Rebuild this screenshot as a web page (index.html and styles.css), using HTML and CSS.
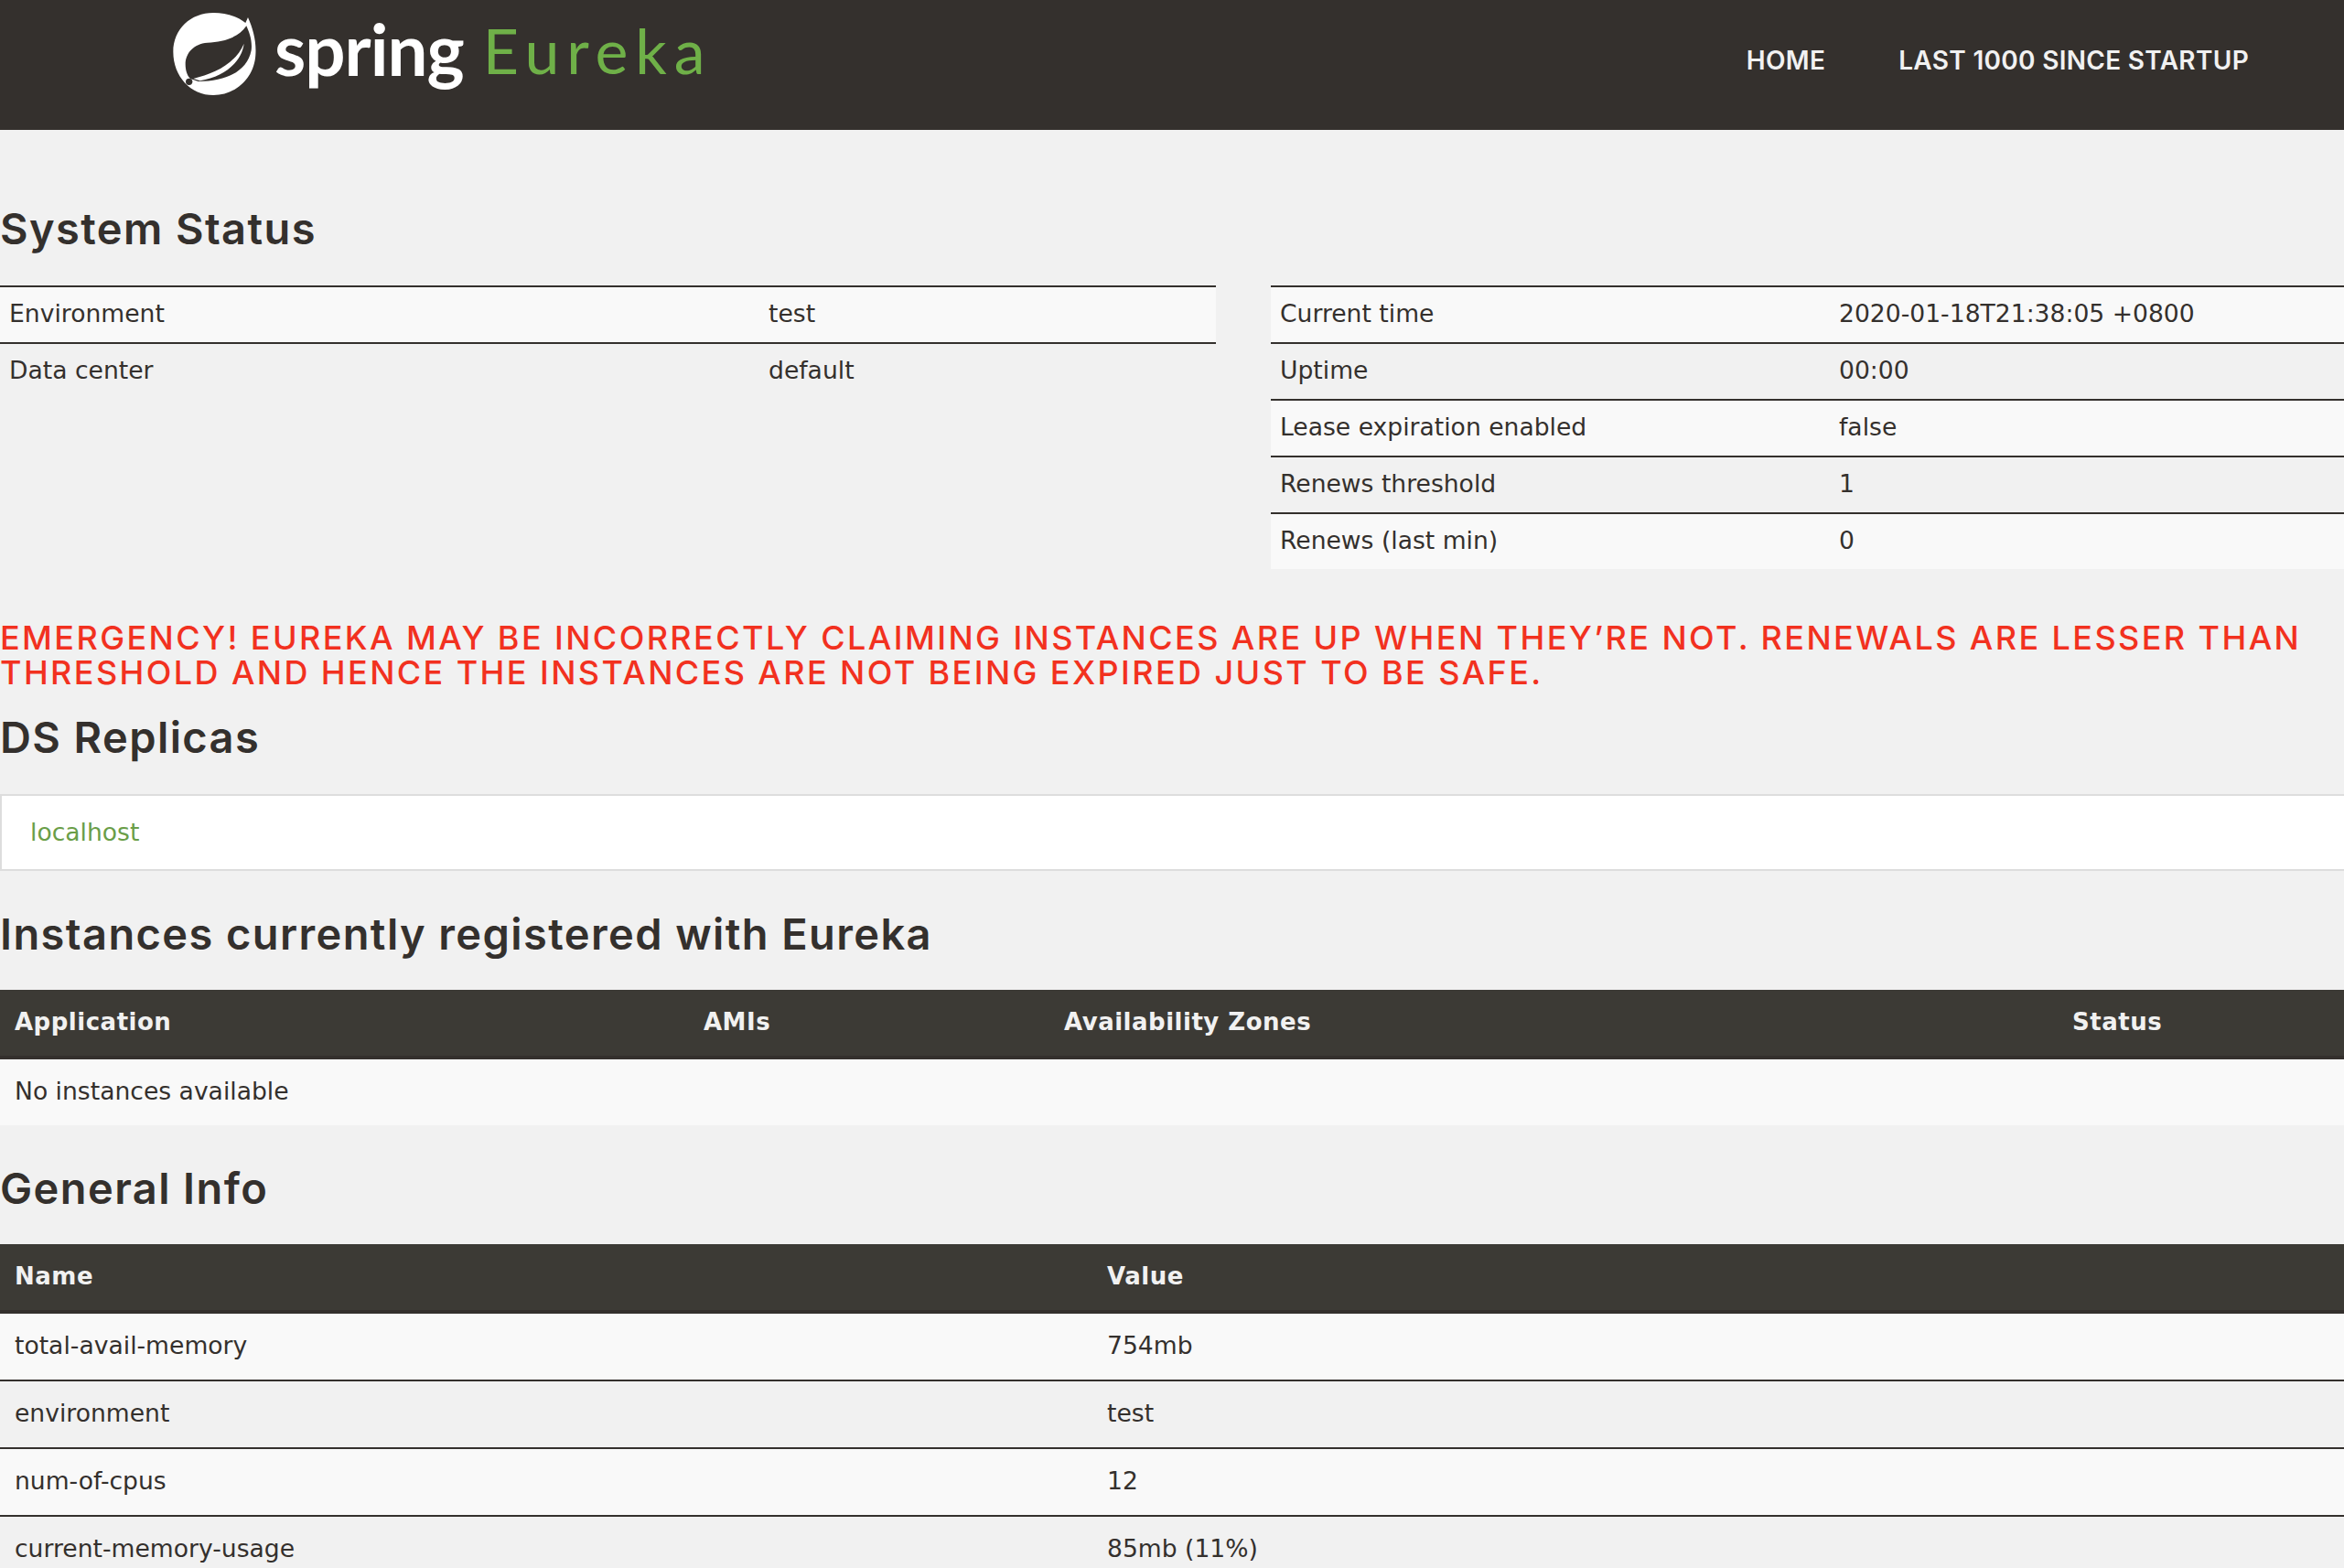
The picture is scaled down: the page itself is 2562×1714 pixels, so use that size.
FILE: index.html
```html
<!DOCTYPE html>
<html lang="en">
<head>
<meta charset="utf-8">
<title>Eureka</title>
<link rel="stylesheet" href="styles.css">
</head>
<body>
<nav class="navbar">
  <a class="brand" href="#">
    <svg class="leaf" viewBox="0 0 390 330" aria-hidden="true">
      <path class="leaf-white" d="M303 42C320 80 331 120 328 165C324 238 265 297 190 297C115 297 58 235 58 155C58 80 115 27 190 27C230 27 268 38 295 60Z"/>
      <path class="leaf-dark" d="M298 70C270 110 222 122 170 125C125 128 98 160 98 195C98 215 103 232 114 243L140 252C230 252 300 220 314 150C318 120 308 92 298 70Z"/>
      <path class="leaf-white" d="M124 243C190 228 262 195 290 128C282 190 225 236 146 250Z"/>
      <circle class="leaf-dark" cx="110" cy="253" r="11"/>
    </svg>
    <span class="brand-spring">spring</span>
    <span class="brand-eureka">Eureka</span>
  </a>
  <ul class="nav-links">
    <li><a href="#">HOME</a></li>
    <li><a href="#">LAST 1000 SINCE STARTUP</a></li>
  </ul>
</nav>
<main class="content">
  <h1 class="title title-first">System Status</h1>
  <div class="status-grid">
    <table class="table table-kv">
      <tbody>
        <tr><td class="col-env">Environment</td><td>test</td></tr>
        <tr class="row-plain"><td>Data center</td><td>default</td></tr>
      </tbody>
    </table>
    <table class="table table-kv">
      <tbody>
        <tr><td class="col-time">Current time</td><td>2020-01-18T21:38:05 +0800</td></tr>
        <tr><td>Uptime</td><td>00:00</td></tr>
        <tr><td>Lease expiration enabled</td><td>false</td></tr>
        <tr><td>Renews threshold</td><td>1</td></tr>
        <tr><td>Renews (last min)</td><td>0</td></tr>
      </tbody>
    </table>
  </div>
  <h4 class="emergency">EMERGENCY! EUREKA MAY BE INCORRECTLY CLAIMING INSTANCES ARE UP WHEN THEY’RE NOT. RENEWALS ARE LESSER THAN THRESHOLD AND HENCE THE INSTANCES ARE NOT BEING EXPIRED JUST TO BE SAFE.</h4>
  <h1 class="title title-ds">DS Replicas</h1>
  <ul class="replicas"><li><a href="#">localhost</a></li></ul>
  <h1 class="title">Instances currently registered with Eureka</h1>
  <table class="table table-data">
    <thead>
      <tr><th class="col-app">Application</th><th class="col-ami">AMIs</th><th class="col-zone">Availability Zones</th><th>Status</th></tr>
    </thead>
    <tbody>
      <tr><td colspan="4">No instances available</td></tr>
    </tbody>
  </table>
  <h1 class="title">General Info</h1>
  <table class="table table-data">
    <thead>
      <tr><th class="col-name">Name</th><th>Value</th></tr>
    </thead>
    <tbody>
      <tr><td>total-avail-memory</td><td>754mb</td></tr>
      <tr><td>environment</td><td>test</td></tr>
      <tr><td>num-of-cpus</td><td>12</td></tr>
      <tr><td>current-memory-usage</td><td>85mb (11%)</td></tr>
    </tbody>
  </table>
</main>
</body>
</html>
```
FILE: styles.css
```css
* { box-sizing: border-box; }
html, body { margin: 0; height: 100%; overflow: hidden; }
body {
  background: #f1f1f1;
  color: #34302d;
  font-family: "DejaVu Sans", sans-serif;
  font-size: 26.6px;
}
a { text-decoration: none; }

.navbar {
  height: 142px;
  background: #34302d;
  display: flex;
  justify-content: space-between;
  align-items: flex-start;
  padding: 0 104px 0 189px;
}
.brand { display: flex; align-items: flex-start; height: 110px; }
.leaf { width: 130px; height: 110px; margin: 5px 0 0 -19px; flex: none; }
.leaf-white { fill: #fff; }
.leaf-dark { fill: #34302d; }
.brand-spring {
  font-family: "Lato", sans-serif;
  font-weight: 700;
  color: #fff;
  font-size: 78px;
  line-height: 106px;
  letter-spacing: -1px;
}
.brand-eureka {
  font-family: "Lato", sans-serif;
  font-weight: 400;
  color: #6fb048;
  font-size: 68px;
  line-height: 110px;
  letter-spacing: 7.9px;
  margin-left: 21px;
}
.nav-links {
  list-style: none;
  margin: 0;
  padding: 48px 0 0;
  display: flex;
  gap: 80px;
}
.nav-links a {
  font-family: "Inter", sans-serif;
  font-weight: 600;
  font-size: 28px;
  line-height: 36px;
  letter-spacing: 0.3px;
  color: #f1f1f1;
}

.title {
  font-family: "Inter", sans-serif;
  font-weight: 600;
  font-size: 47px;
  line-height: 50px;
  letter-spacing: 1.4px;
  margin: 44px 0 36px;
}
.title-first { margin: 83px 0 37px; }
.title-ds { margin: 27px 0 37px; }

.status-grid {
  display: grid;
  grid-template-columns: 1329px 1173px;
  gap: 60px;
  align-items: start;
}
.table {
  width: 100%;
  border-collapse: separate;
  border-spacing: 0;
  table-layout: fixed;
}
.table td, .table th { text-align: left; font-weight: 400; }
.table-kv td {
  height: 62px;
  padding: 0 10px 3px;
  border-top: 2px solid #34302d;
}
.table tbody tr:nth-child(odd) { background: #f9f9f9; }
.table-kv .row-plain:nth-child(even) { background: transparent; }
.col-env { width: 830px; }
.col-time { width: 611px; }

.emergency {
  margin: 56px 0 0;
  color: #f2311f;
  font-family: "Inter", sans-serif;
  font-weight: 500;
  font-size: 36px;
  line-height: 38px;
  letter-spacing: 2.4px;
}

.replicas {
  list-style: none;
  margin: 0 -4px 0 0;
  height: 84px;
  padding: 0 0 2px 31px;
  display: flex;
  align-items: center;
  background: #fff;
  border: 2px solid #ddd;
}
.replicas a { color: #6a9e48; }

.table-data th {
  height: 76px;
  padding: 0 16px 3px;
  background: #3c3a35;
  border-bottom: 4px solid #34302d;
  color: #f1f1f1;
  font-size: 26px;
  font-weight: 600;
  letter-spacing: 0.5px;
}
.table-data td {
  height: 72px;
  padding: 0 16px 3px;
}
.table-data tbody tr + tr td {
  height: 74px;
  border-top: 2px solid #34302d;
}
.col-app { width: 753px; }
.col-ami { width: 394px; }
.col-zone { width: 1102px; }
.col-name { width: 1194px; }
```
